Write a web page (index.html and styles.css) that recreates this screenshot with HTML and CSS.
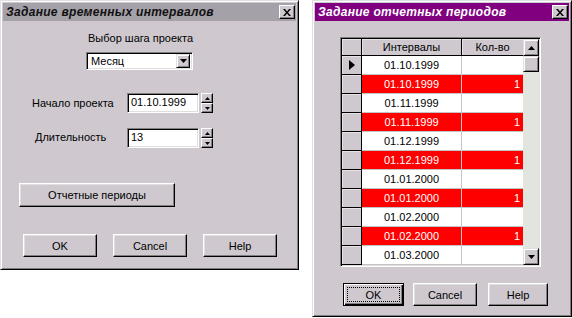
FILE: index.html
```html
<!DOCTYPE html>
<html>
<head>
    <title>Задание интервалов</title>
    <link rel="stylesheet" href="styles.css">
</head>
<body>
    <div class="desktop">
        <div class="window win-steps">
            <div class="caption caption-inactive">
                <span class="caption-text">Задание временных интервалов</span>
                <span class="close-btn"><svg width="8" height="7" viewBox="0 0 8 7"><path d="M0 0h2l2 2.5L6 0h2L5 3.5 8 7H6L4 4.5 2 7H0l3-3.5z" fill="#000"/></svg></span>
            </div>

            <div class="step-title">Выбор шага проекта</div>

            <div class="combo">
                <span class="combo-value">Месяц</span>
                <span class="combo-btn"><svg width="7" height="4" viewBox="0 0 7 4"><path d="M0 0h7L3.5 4z" fill="#000"/></svg></span>
            </div>

            <div class="field-row row-start">
                <span class="field-label label-start">Начало проекта</span>
                <div class="edit">01.10.1999</div>
                <div class="spin">
                    <span class="spin-btn"><svg width="5" height="3" viewBox="0 0 5 3"><path d="M0 3h5L2.5 0z" fill="#000"/></svg></span>
                    <span class="spin-btn"><svg width="5" height="3" viewBox="0 0 5 3"><path d="M0 0h5L2.5 3z" fill="#000"/></svg></span>
                </div>
            </div>

            <div class="field-row row-length">
                <span class="field-label label-length">Длительность</span>
                <div class="edit">13</div>
                <div class="spin">
                    <span class="spin-btn"><svg width="5" height="3" viewBox="0 0 5 3"><path d="M0 3h5L2.5 0z" fill="#000"/></svg></span>
                    <span class="spin-btn"><svg width="5" height="3" viewBox="0 0 5 3"><path d="M0 0h5L2.5 3z" fill="#000"/></svg></span>
                </div>
            </div>

            <div class="btn btn-report">Отчетные периоды</div>

            <div class="btn-row steps-buttons">
                <div class="btn btn-wide">OK</div>
                <div class="btn btn-wide">Cancel</div>
                <div class="btn btn-wide">Help</div>
            </div>
        </div>

        <div class="window win-periods">
            <div class="caption caption-active">
                <span class="caption-text">Задание отчетных периодов</span>
                <span class="close-btn"><svg width="8" height="7" viewBox="0 0 8 7"><path d="M0 0h2l2 2.5L6 0h2L5 3.5 8 7H6L4 4.5 2 7H0l3-3.5z" fill="#000"/></svg></span>
            </div>

            <div class="grid">
                <div class="grid-table">
                    <div class="grid-row grid-head">
                        <div class="ind"></div>
                        <div class="cell c-int">Интервалы</div>
                        <div class="cell c-cnt">Кол-во</div>
                    </div>
                    <div class="grid-row">
                        <div class="ind"><svg width="6" height="10" viewBox="0 0 6 10"><path d="M0 0l6 5-6 5z" fill="#000"/></svg></div>
                        <div class="cell c-int">01.10.1999</div>
                        <div class="cell c-cnt"></div>
                    </div>
                    <div class="grid-row row-red">
                        <div class="ind"></div>
                        <div class="cell c-int">01.10.1999</div>
                        <div class="cell c-cnt">1</div>
                    </div>
                    <div class="grid-row">
                        <div class="ind"></div>
                        <div class="cell c-int">01.11.1999</div>
                        <div class="cell c-cnt"></div>
                    </div>
                    <div class="grid-row row-red">
                        <div class="ind"></div>
                        <div class="cell c-int">01.11.1999</div>
                        <div class="cell c-cnt">1</div>
                    </div>
                    <div class="grid-row">
                        <div class="ind"></div>
                        <div class="cell c-int">01.12.1999</div>
                        <div class="cell c-cnt"></div>
                    </div>
                    <div class="grid-row row-red">
                        <div class="ind"></div>
                        <div class="cell c-int">01.12.1999</div>
                        <div class="cell c-cnt">1</div>
                    </div>
                    <div class="grid-row">
                        <div class="ind"></div>
                        <div class="cell c-int">01.01.2000</div>
                        <div class="cell c-cnt"></div>
                    </div>
                    <div class="grid-row row-red">
                        <div class="ind"></div>
                        <div class="cell c-int">01.01.2000</div>
                        <div class="cell c-cnt">1</div>
                    </div>
                    <div class="grid-row">
                        <div class="ind"></div>
                        <div class="cell c-int">01.02.2000</div>
                        <div class="cell c-cnt"></div>
                    </div>
                    <div class="grid-row row-red">
                        <div class="ind"></div>
                        <div class="cell c-int">01.02.2000</div>
                        <div class="cell c-cnt">1</div>
                    </div>
                    <div class="grid-row">
                        <div class="ind"></div>
                        <div class="cell c-int">01.03.2000</div>
                        <div class="cell c-cnt"></div>
                    </div>
                </div>

                <div class="vscroll">
                    <span class="sb-btn"><svg width="7" height="4" viewBox="0 0 7 4"><path d="M0 4h7L3.5 0z" fill="#000"/></svg></span>
                    <span class="sb-thumb"></span>
                    <span class="sb-track"></span>
                    <span class="sb-btn"><svg width="7" height="4" viewBox="0 0 7 4"><path d="M0 0h7L3.5 4z" fill="#000"/></svg></span>
                </div>
            </div>

            <div class="btn-row periods-buttons">
                <div class="btn btn-default btn-ok"><span class="focus">OK</span></div>
                <div class="btn btn-cancel">Cancel</div>
                <div class="btn btn-help">Help</div>
            </div>
        </div>
    </div>
</body>
</html>
```

FILE: styles.css
```css
body {
    margin: 0;
    background-color: #ffffff;
    font-family: "Liberation Sans", Arial, sans-serif;
    font-size: 11px;
    color: #000000;
}

.desktop {
    display: flex;
    align-items: flex-start;
}

.window {
    box-sizing: border-box;
    display: flex;
    flex-direction: column;
    background-color: #cfc9cf;
    border: 1px solid;
    border-color: #dfdfdf #000000 #000000 #dfdfdf;
    box-shadow: inset 1px 1px #ffffff, inset -1px -1px #808080;
    padding: 2px;
}

.win-steps {
    width: 299px;
    height: 270px;
}

.win-periods {
    width: 260px;
    height: 317px;
    margin-left: 13px;
}

.caption {
    height: 18px;
    display: flex;
    align-items: center;
    justify-content: space-between;
    padding: 0 1px 0 3px;
}

.caption-inactive {
    background-color: #a5a1a9;
    color: #111111;
}

.caption-active {
    background-color: #800080;
    color: #ffffff;
}

.caption-text {
    font-size: 12px;
    font-weight: bold;
    font-style: italic;
    letter-spacing: 0.3px;
}

.close-btn {
    box-sizing: border-box;
    width: 16px;
    height: 14px;
    display: flex;
    align-items: center;
    justify-content: center;
    background-color: #cfc9cf;
    border: 1px solid;
    border-color: #ffffff #000000 #000000 #ffffff;
    box-shadow: inset -1px -1px #808080;
}

/* left dialog */

.step-title {
    margin-top: 10px;
    padding-left: 85px;
    line-height: 14px;
}

.combo {
    box-sizing: border-box;
    width: 107px;
    height: 18px;
    margin: 7px 0 0 83px;
    display: flex;
    align-items: center;
    justify-content: space-between;
    background-color: #ffffff;
    border: 1px solid;
    border-color: #808080 #ffffff #ffffff #808080;
    box-shadow: inset 1px 1px #000000, inset -1px -1px #dfdfdf;
    padding: 2px 2px 2px 4px;
}

.combo-btn {
    box-sizing: border-box;
    width: 14px;
    height: 14px;
    display: flex;
    align-items: center;
    justify-content: center;
    background-color: #cfc9cf;
    border: 1px solid;
    border-color: #dfdfdf #000000 #000000 #dfdfdf;
    box-shadow: inset 1px 1px #ffffff, inset -1px -1px #808080;
}

.field-row {
    display: flex;
    align-items: center;
}

.row-start {
    margin: 23px 0 0 29px;
}

.row-length {
    margin: 15px 0 0 32px;
}

.label-start {
    width: 95px;
}

.label-length {
    width: 92px;
    margin-top: -3px;
}

.edit {
    box-sizing: border-box;
    width: 72px;
    height: 20px;
    line-height: 16px;
    padding-left: 3px;
    background-color: #ffffff;
    border: 1px solid;
    border-color: #808080 #ffffff #ffffff #808080;
    box-shadow: inset 1px 1px #000000, inset -1px -1px #dfdfdf;
}

.spin {
    display: flex;
    flex-direction: column;
    margin-left: 2px;
}

.spin-btn {
    box-sizing: border-box;
    width: 12px;
    height: 10px;
    display: flex;
    align-items: center;
    justify-content: center;
    background-color: #cfc9cf;
    border: 1px solid;
    border-color: #ffffff #000000 #000000 #ffffff;
    box-shadow: inset -1px -1px #808080;
}

.btn {
    box-sizing: border-box;
    height: 23px;
    display: flex;
    align-items: center;
    justify-content: center;
    background-color: #cfc9cf;
    border: 1px solid;
    border-color: #ffffff #000000 #000000 #ffffff;
    box-shadow: inset -1px -1px #808080, inset 1px 1px #dfdfdf;
}

.btn-report {
    width: 156px;
    height: 24px;
    margin: 35px 0 0 16px;
}

.btn-row {
    display: flex;
}

.steps-buttons {
    margin: 27px 0 0 20px;
    gap: 16px;
}

.btn-wide {
    width: 74px;
}

/* right dialog */

.grid {
    box-sizing: border-box;
    width: 201px;
    height: 230px;
    margin: 16px 0 0 25px;
    display: flex;
    background-color: #ffffff;
    border: 1px solid;
    border-color: #808080 #ffffff #ffffff #808080;
    box-shadow: inset 1px 1px #000000, inset -1px -1px #dfdfdf;
    padding: 1px;
}

.grid-table {
    width: 181px;
}

.grid-row {
    display: flex;
    height: 19px;
}

.ind {
    box-sizing: border-box;
    width: 20px;
    display: flex;
    align-items: center;
    justify-content: center;
    background-color: #cfc9cf;
    border-right: 1px solid #000000;
    border-bottom: 1px solid #000000;
    box-shadow: inset 1px 1px #e6e2e6;
}

.cell {
    box-sizing: border-box;
    display: flex;
    align-items: center;
    border-bottom: 1px solid #c4c4c4;
}

.c-int {
    width: 100px;
    justify-content: center;
    border-right: 1px solid #c4c4c4;
}

.c-cnt {
    width: 61px;
    justify-content: flex-end;
    padding-right: 3px;
}

.grid-head {
    height: 17px;
}

.grid-head .cell {
    background-color: #cfc9cf;
    border-bottom-color: #000000;
    box-shadow: inset 1px 1px #e6e2e6;
}

.grid-head .c-int {
    border-right-color: #000000;
}

.grid-head .c-cnt {
    justify-content: center;
    padding-right: 0;
}

.row-red .cell {
    background-color: #ff0000;
    color: #ffffff;
}

.vscroll {
    width: 16px;
    display: flex;
    flex-direction: column;
    background-color: #e1e5dd;
}

.sb-btn,
.sb-thumb {
    box-sizing: border-box;
    width: 16px;
    height: 17px;
    display: flex;
    align-items: center;
    justify-content: center;
    background-color: #cfc9cf;
    border: 1px solid;
    border-color: #dfdfdf #000000 #000000 #dfdfdf;
    box-shadow: inset 1px 1px #ffffff, inset -1px -1px #808080;
}

.sb-thumb {
    height: 16px;
}

.sb-track {
    flex: 1;
}

.periods-buttons {
    margin: 16px 0 0 28px;
}

.btn-default {
    border-color: #000000;
    box-shadow: inset 1px 1px #ffffff, inset -1px -1px #000000, inset -2px -2px #808080;
}

.focus {
    box-sizing: border-box;
    width: 53px;
    height: 15px;
    display: flex;
    align-items: center;
    justify-content: center;
    border: 1px dotted #000000;
}

.btn-ok {
    width: 61px;
}

.btn-cancel {
    width: 64px;
    margin-left: 9px;
}

.btn-help {
    width: 60px;
    margin-left: 11px;
}
```
